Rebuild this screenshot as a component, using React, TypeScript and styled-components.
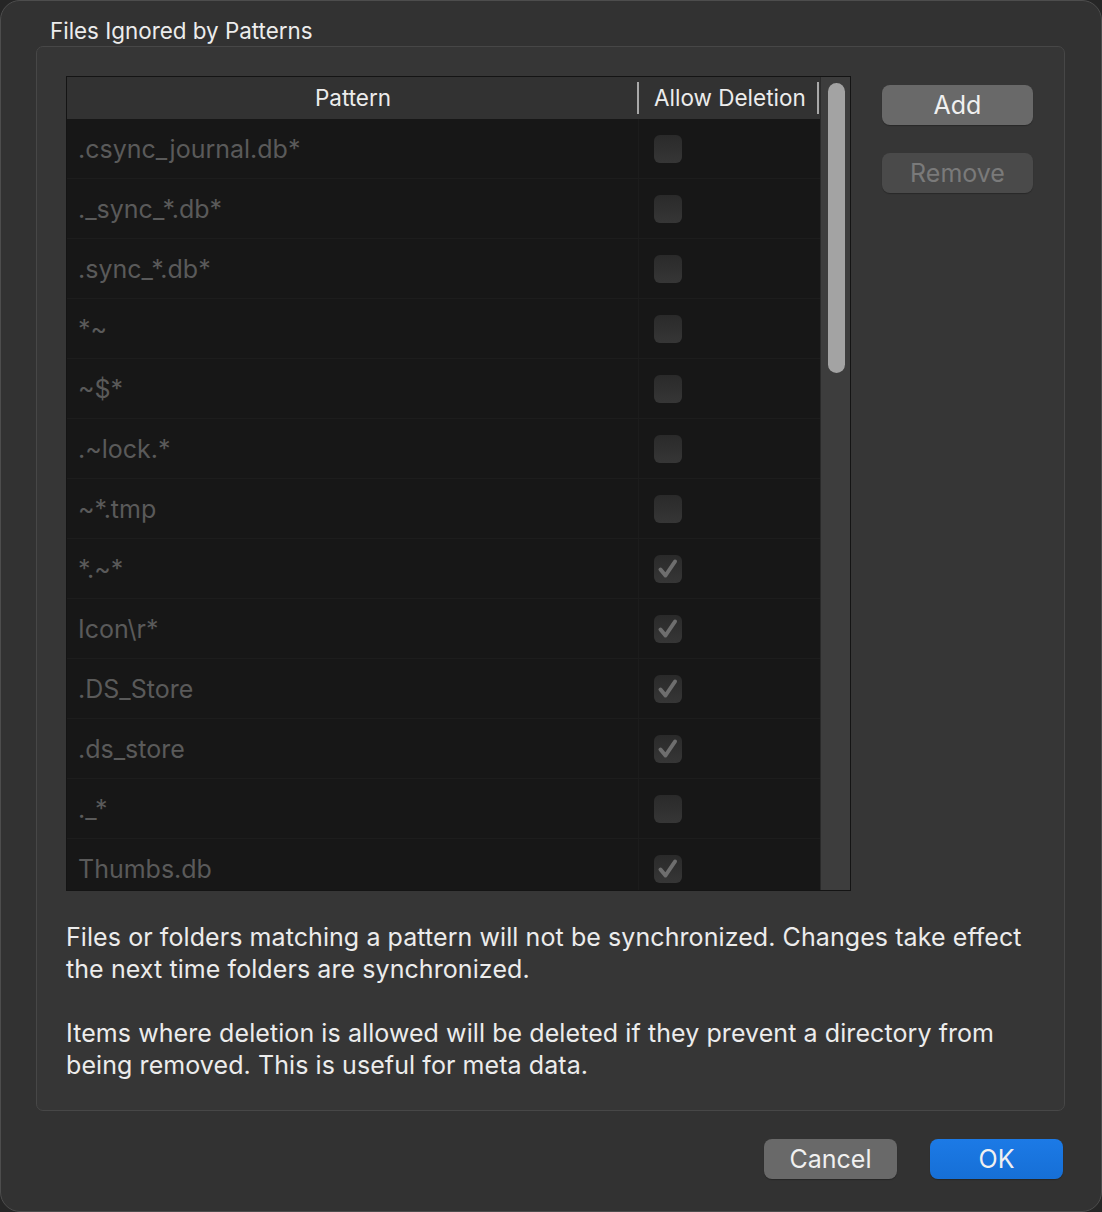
import React from "react";
import styled, { createGlobalStyle } from "styled-components";

const Global = createGlobalStyle`
  html, body { margin: 0; padding: 0; background: #262626; }
  body { font-family: Inter, "Liberation Sans", sans-serif; -webkit-font-smoothing: antialiased; }
  * { box-sizing: border-box; }
`;

const Window = styled.div`
  width: 1102px;
  height: 1212px;
  background: #323232;
  border: 1px solid #4d4d4d;
  border-radius: 20px;
  display: flex;
  flex-direction: column;
  overflow: hidden;
`;

const Title = styled.div`
  color: #ececec;
  font-size: 22.4px;
  line-height: 24px;
  padding: 18px 0 0 49px;
  height: 45px;
`;

const Group = styled.div`
  margin: 0 36px 0 35px;
  height: 1065px;
  background: #363636;
  border: 1px solid #474747;
  border-radius: 7px;
  padding: 29px 30px 0 29px;
  display: flex;
  flex-direction: column;
`;

const TopRow = styled.div`
  display: flex;
  gap: 31px;
`;

const Table = styled.div`
  width: 785px;
  height: 815px;
  border: 1px solid #141414;
  display: flex;
  background: #171717;
`;

const TableMain = styled.div`
  flex: 1;
  display: flex;
  flex-direction: column;
  overflow: hidden;
`;

const Header = styled.div`
  height: 42px;
  flex: none;
  background: #323232;
  display: grid;
  grid-template-columns: 572px 180px;
  color: #ececec;
  font-size: 22.5px;
  padding-bottom: 2px;
`;

const HeadCell = styled.div<{ $center?: boolean }>`
  display: flex;
  align-items: center;
  justify-content: ${(p) => (p.$center ? "center" : "flex-start")};
  padding-left: ${(p) => (p.$center ? "0" : "15px")};
  position: relative;
  &::after {
    content: "";
    position: absolute;
    right: 0;
    top: 5px;
    bottom: 3px;
    width: 2px;
    background: #a8a8a8;
  }
`;

const Row = styled.div`
  height: 60px;
  flex: none;
  display: grid;
  grid-template-columns: 572px 180px;
  border-bottom: 1px solid #1d1d1d;
`;

const PatternCell = styled.div`
  display: flex;
  align-items: center;
  padding-left: 11px;
  color: #5a5a5a;
  font-size: 25px;
  border-right: 1px solid #1c1c1c;
`;

const CheckCell = styled.div`
  display: flex;
  align-items: center;
  padding-left: 15px;
`;

const Check = styled.div`
  width: 28px;
  height: 28px;
  border-radius: 6px;
  background: linear-gradient(#2a2a2a, #363636);
  display: flex;
  align-items: center;
  justify-content: center;
`;

const ScrollTrack = styled.div`
  width: 30px;
  flex: none;
  background: #3d3d3d;
  border-left: 1px solid #2a2a2a;
  padding: 6px 0 0 7px;
`;

const Thumb = styled.div`
  width: 17px;
  height: 290px;
  border-radius: 9px;
  background: #a3a3a3;
`;

const SideButtons = styled.div`
  display: flex;
  flex-direction: column;
  gap: 28px;
  padding-top: 9px;
`;

const Btn = styled.div<{ $disabled?: boolean; $primary?: boolean; $w?: number }>`
  width: ${(p) => p.$w ?? 151}px;
  height: 40px;
  border-radius: 8px;
  display: flex;
  align-items: center;
  justify-content: center;
  font-size: 25px;
  color: ${(p) => (p.$disabled ? "#7a7a7a" : "#f0f0f0")};
  background: ${(p) =>
    p.$primary
      ? "linear-gradient(#1c7ae6, #166fd6)"
      : p.$disabled
      ? "#4a4a4a"
      : "#696969"};
  box-shadow: 0 1px 1px rgba(0, 0, 0, 0.25);
`;

const Desc = styled.div`
  margin-top: 30px;
  color: #ececec;
  font-size: 25px;
  letter-spacing: 0.08px;
  line-height: 32px;
  white-space: nowrap;
  p { margin: 0 0 32px; }
`;

const Footer = styled.div`
  display: flex;
  justify-content: flex-end;
  gap: 33px;
  padding: 28px 38px 0 0;
`;

const rows: [string, boolean][] = [
  [".csync_journal.db*", false],
  ["._sync_*.db*", false],
  [".sync_*.db*", false],
  ["*~", false],
  ["~$*", false],
  [".~lock.*", false],
  ["~*.tmp", false],
  ["*.~*", true],
  ["Icon\\r*", true],
  [".DS_Store", true],
  [".ds_store", true],
  ["._*", false],
  ["Thumbs.db", true],
];

const Tick = () => (
  <svg width="24" height="24" viewBox="0 0 24 24">
    <path d="M4.5 12.5 L9.5 18.5 L19 4.5" fill="none" stroke="#6e6e6e" strokeWidth="4" strokeLinecap="round" strokeLinejoin="round" />
  </svg>
);

export default function App() {
  return (
    <Window>
      <Global />
      <Title>Files Ignored by Patterns</Title>
      <Group>
        <TopRow>
          <Table>
            <TableMain>
              <Header>
                <HeadCell $center>Pattern</HeadCell>
                <HeadCell>Allow Deletion</HeadCell>
              </Header>
              {rows.map(([p, c]) => (
                <Row key={p}>
                  <PatternCell>{p}</PatternCell>
                  <CheckCell>
                    <Check>{c && <Tick />}</Check>
                  </CheckCell>
                </Row>
              ))}
            </TableMain>
            <ScrollTrack>
              <Thumb />
            </ScrollTrack>
          </Table>
          <SideButtons>
            <Btn>Add</Btn>
            <Btn $disabled>Remove</Btn>
          </SideButtons>
        </TopRow>
        <Desc>
          <p>
            Files or folders matching a pattern will not be synchronized. Changes take effect
            <br />
            the next time folders are synchronized.
          </p>
          <p>
            Items where deletion is allowed will be deleted if they prevent a directory from
            <br />
            being removed. This is useful for meta data.
          </p>
        </Desc>
      </Group>
      <Footer>
        <Btn $w={133}>Cancel</Btn>
        <Btn $w={133} $primary>OK</Btn>
      </Footer>
    </Window>
  );
}
